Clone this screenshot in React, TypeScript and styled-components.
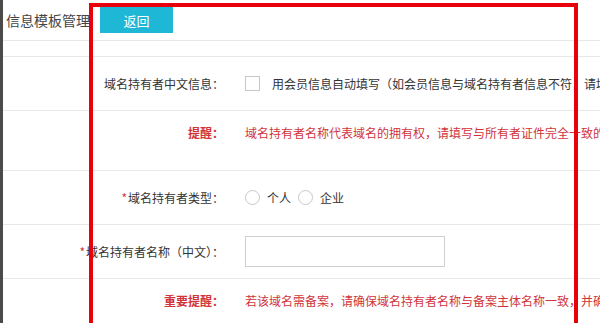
import React from 'react';
import styled, { createGlobalStyle } from 'styled-components';

const GlobalStyle = createGlobalStyle`
  html, body {
    margin: 0;
    padding: 0;
    background: #fff;
    overflow: hidden;
  }
  body {
    font-family: "Microsoft YaHei", "Noto Sans CJK SC", "Noto Sans", sans-serif;
    font-size: 12px;
    color: #333;
  }
`;

const Page = styled.div`
  position: relative;
  width: 1000px;
  min-height: 323px;
  border-left: 3px solid #4a4a4a;
  white-space: nowrap;
`;

const Header = styled.div`
  display: flex;
  align-items: center;
  height: 40px;
  border-bottom: 1px solid #e8e8e8;
`;

const Title = styled.div`
  padding-left: 3px;
  font-size: 14px;
  line-height: 20px;
  color: #444;
`;

const BackButton = styled.button`
  margin-left: 10px;
  width: 73px;
  height: 26px;
  border: none;
  background: #1fb7d6;
  color: #fff;
  font-family: inherit;
  font-size: 13px;
  cursor: pointer;
`;

const Spacer = styled.div`
  height: 15px;
  border-bottom: 1px solid #e8e8e8;
`;

const Row = styled.div<{ $h: number; $top?: boolean }>`
  display: flex;
  align-items: ${({ $top }) => ($top ? 'flex-start' : 'center')};
  height: ${({ $h }) => $h}px;
  padding-top: ${({ $top }) => ($top ? '13px' : '0')};
  box-sizing: border-box;
  border-bottom: 1px solid #e8e8e8;
  line-height: 18px;
`;

const Label = styled.div<{ $warn?: boolean }>`
  width: 221px;
  flex: none;
  text-align: right;
  color: ${({ $warn }) => ($warn ? '#d0343a' : '#333')};
  font-weight: ${({ $warn }) => ($warn ? 700 : 400)};
`;

const Star = styled.span`
  color: #d0343a;
  margin-right: 1px;
`;

const Value = styled.div`
  display: flex;
  align-items: center;
  padding-left: 21px;
`;

const Notice = styled.div`
  padding-left: 21px;
  color: #d0343a;
`;

const CheckBox = styled.span`
  width: 15px;
  height: 15px;
  box-sizing: border-box;
  border: 1px solid #c8c8c8;
  background: #fff;
  margin-right: 12px;
`;

const Radio = styled.span`
  width: 15px;
  height: 15px;
  box-sizing: border-box;
  border: 1px solid #c8c8c8;
  border-radius: 50%;
  background: #fff;
  margin-right: 7px;
`;

const OptionText = styled.span`
  margin-right: 7px;
`;

const TextInput = styled.input`
  width: 200px;
  height: 31px;
  box-sizing: border-box;
  border: 1px solid #cfcfcf;
  outline: none;
  padding: 0 6px;
  font-family: inherit;
`;

const Highlight = styled.div`
  position: absolute;
  left: 86px;
  top: 3px;
  width: 489px;
  height: 400px;
  box-sizing: border-box;
  border: 4px solid #e8000b;
  pointer-events: none;
`;

export default function App() {
  return (
    <>
      <GlobalStyle />
      <Page>
        <Header>
          <Title>信息模板管理</Title>
          <BackButton>返回</BackButton>
        </Header>
        <Spacer />
        <Row $h={54}>
          <Label>域名持有者中文信息：</Label>
          <Value>
            <CheckBox />
            用会员信息自动填写（如会员信息与域名持有者信息不符，请填写以下信息）
          </Value>
        </Row>
        <Row $h={60} $top>
          <Label $warn>提醒：</Label>
          <Notice>域名持有者名称代表域名的拥有权，请填写与所有者证件完全一致的企业名称或姓名。</Notice>
        </Row>
        <Row $h={54}>
          <Label><Star>*</Star>域名持有者类型：</Label>
          <Value>
            <Radio />
            <OptionText>个人</OptionText>
            <Radio />
            <OptionText>企业</OptionText>
          </Value>
        </Row>
        <Row $h={54}>
          <Label><Star>*</Star>域名持有者名称（中文）：</Label>
          <Value>
            <TextInput />
          </Value>
        </Row>
        <Row $h={60} $top>
          <Label $warn>重要提醒：</Label>
          <Notice>若该域名需备案，请确保域名持有者名称与备案主体名称一致，并确保证件信息真实有效。</Notice>
        </Row>
        <Highlight />
      </Page>
    </>
  );
}
